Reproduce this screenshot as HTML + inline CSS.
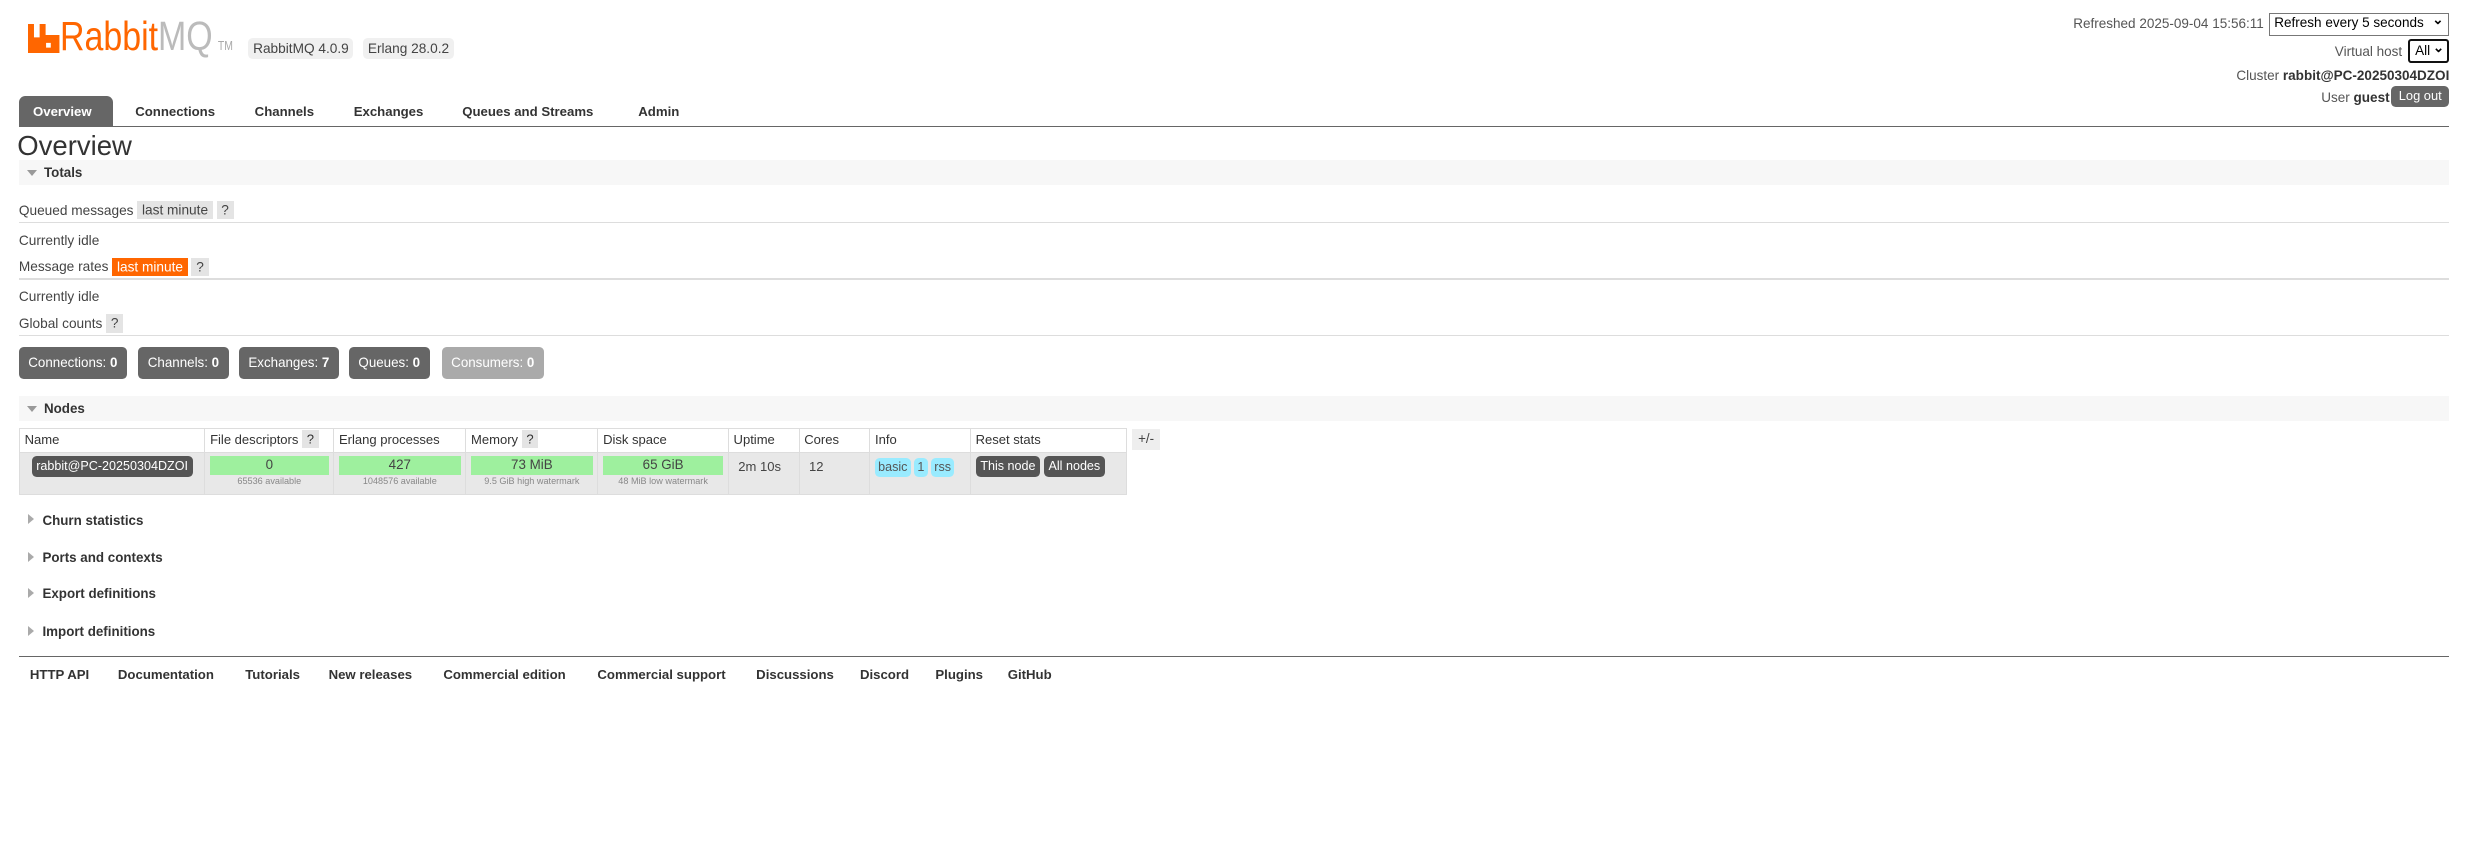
<!DOCTYPE html>
<html><head><meta charset="utf-8">
<style>
html,body{margin:0;padding:0;background:#fff;width:2465px;height:868px;overflow:hidden}
#w{zoom:1.5721;width:1568px;height:552px;position:relative;font-family:"Liberation Sans",sans-serif;color:#444;font-size:8.7px}
.a{position:absolute;white-space:nowrap}
.b{font-weight:bold}
.badge{background:#f0f0f0;border-radius:3px;padding:2px 3px;font-size:8.7px;color:#444}
.r{font-size:8.6px;color:#555;text-align:right;right:10px}
.sel{border:1px solid #777;background:#fff;color:#000;font-size:8.6px;box-sizing:border-box}
.tab{top:66px;font-weight:bold;font-size:8.4px;color:#333}
.hr{position:absolute;left:12px;width:1546px;height:1px;background:#ddd}
.sh{position:absolute;left:12px;width:1546px;height:16px;background:#f7f7f7}
.sh span{position:absolute;left:16px;top:3px;font-weight:bold;font-size:8.5px;color:#333}
.tri{position:absolute;left:5px;top:6px;width:0;height:0;border-left:3.5px solid transparent;border-right:3.5px solid transparent;border-top:4px solid #999}
.trr{position:absolute;left:18px;width:0;height:0;border-top:3.5px solid transparent;border-bottom:3.5px solid transparent;border-left:4px solid #aaa}
.q{background:#e4e4e4;padding:1px 3px}
.cnt{position:absolute;top:221px;height:20px;line-height:20px;background:#666;color:#fff;border-radius:3px;padding:0 6px;font-size:8.5px;box-sizing:border-box}
table{position:absolute;left:12px;top:272px;border-collapse:collapse;border:1px solid #ccc;font-size:8.3px;table-layout:fixed;width:704px}
td,th{border:1px solid #ddd;padding:0;text-align:left;font-weight:normal;vertical-align:top;white-space:nowrap;overflow:hidden}
th{height:13px;padding:2px 3px 0;background:#fff;color:#333}
tr.d td{background:#e8e8e8;height:22px;text-align:center}
.g{background:#9ef09e;margin:2px 3px 0;height:12px;line-height:12px;color:#444;font-size:8.5px}
.s{font-size:5.8px;color:#888;line-height:8px}
.pill{display:inline-block;background:#555;color:#fff;border-radius:3px;padding:0 3px;height:13px;line-height:13px;margin-top:2px;font-size:8px}
.i{display:inline-block;background:#99ebff;border-radius:3px;padding:0 2px;height:12px;line-height:12px;margin-top:3px;color:#555;font-size:8px}
.ft{top:424px;font-weight:bold;font-size:8.4px;color:#333}
</style></head><body><div id="w">
<svg class="a" style="left:18px;top:15px" width="20" height="19" viewBox="0 0 20 19"><path d="M0 0h3.8v8.5h3.6V0h3.8v7H20v12H0z M11.5 12v3h3v-3z" fill="#f60" fill-rule="evenodd"/></svg>
<div class="a" style="left:38px;top:8px;font-size:26px;color:#f60;transform:scaleX(0.83);transform-origin:0 0">Rabbit<span style="color:#bbb">MQ</span><span style="font-size:8px;color:#aaa;margin-left:4px">TM</span></div>
<div class="a badge" style="left:158px;top:24px">RabbitMQ 4.0.9</div>
<div class="a badge" style="left:231px;top:24px">Erlang 28.0.2</div>

<div class="a r" style="right:128px;top:10px">Refreshed 2025-09-04 15:56:11</div>
<div class="a sel" style="left:1443px;top:8px;width:115px;height:15px;padding:1px 3px;font-size:8.6px">Refresh every 5 seconds<span style="position:absolute;right:3px;top:-1px;font-weight:bold">&#8964;</span></div>
<div class="a r" style="right:40px;top:28px">Virtual host</div>
<div class="a sel" style="left:1532px;top:25px;width:26px;height:15px;border:1.5px solid #111;border-radius:2px;padding:1px 3px;font-size:8.6px">All<span style="position:absolute;right:2px;top:-1px;font-weight:bold">&#8964;</span></div>
<div class="a r" style="top:43px">Cluster <b style="color:#333">rabbit@PC-20250304DZOI</b></div>
<div class="a r" style="right:48px;top:57px">User <b style="color:#333">guest</b></div>
<div class="a" style="left:1521px;top:55px;width:37px;height:13px;background:#666;color:#fff;border-radius:3px;font-size:8.2px;line-height:13px;text-align:center">Log out</div>

<div class="a" style="left:12px;top:61px;width:60px;height:20px;background:#666;border-radius:4px 4px 0 0"></div>
<div class="a tab" style="left:21px;color:#fff">Overview</div>
<div class="a tab" style="left:86px">Connections</div>
<div class="a tab" style="left:162px">Channels</div>
<div class="a tab" style="left:225px">Exchanges</div>
<div class="a tab" style="left:294px">Queues and Streams</div>
<div class="a tab" style="left:406px">Admin</div>
<div class="a" style="left:12px;top:80px;width:1546px;height:1px;background:#666"></div>
<div class="a" style="left:11px;top:83px;font-size:17.5px;color:#333">Overview</div>

<div class="sh" style="top:102px"><i class="tri"></i><span>Totals</span></div>
<div class="a" style="left:12px;top:129px">Queued messages <span class="q">last minute</span> <span class="q">?</span></div>
<div class="hr" style="top:141px"></div>
<div class="a" style="left:12px;top:148px">Currently idle</div>
<div class="a" style="left:12px;top:165px">Message rates <span class="q" style="background:#f60;color:#fff">last minute</span> <span class="q">?</span></div>
<div class="hr" style="top:177px"></div>
<div class="a" style="left:12px;top:184px">Currently idle</div>
<div class="a" style="left:12px;top:201px">Global counts <span class="q">?</span></div>
<div class="hr" style="top:213px"></div>
<div class="cnt" style="left:12px">Connections: <b>0</b></div>
<div class="cnt" style="left:88px">Channels: <b>0</b></div>
<div class="cnt" style="left:152px">Exchanges: <b>7</b></div>
<div class="cnt" style="left:222px">Queues: <b>0</b></div>
<div class="cnt" style="left:281px;background:#aaa">Consumers: <b>0</b></div>

<div class="sh" style="top:252px"><i class="tri"></i><span>Nodes</span></div>
<table>
<colgroup><col style="width:118px"><col style="width:82px"><col style="width:84px"><col style="width:84px"><col style="width:83px"><col style="width:45px"><col style="width:45px"><col style="width:64px"><col style="width:99px"></colgroup>
<tr><th>Name</th><th>File descriptors <span class="q">?</span></th><th>Erlang processes</th><th>Memory <span class="q">?</span></th><th>Disk space</th><th>Uptime</th><th>Cores</th><th>Info</th><th>Reset stats</th></tr>
<tr class="d"><td><span class="pill" style="margin-top:2px">rabbit@PC-20250304DZOI</span></td>
<td><div class="g">0</div><div class="s">65536 available</div></td>
<td><div class="g">427</div><div class="s">1048576 available</div></td>
<td><div class="g">73 MiB</div><div class="s">9.5 GiB high watermark</div></td>
<td><div class="g">65 GiB</div><div class="s">48 MiB low watermark</div></td>
<td style="text-align:left;padding:4px 0 0 6px">2m 10s</td>
<td style="text-align:left;padding:4px 0 0 6px">12</td>
<td style="text-align:left;padding-left:3px"><span class="i">basic</span> <span class="i">1</span> <span class="i">rss</span></td>
<td style="text-align:left;padding-left:3px"><span class="pill">This node</span> <span class="pill">All nodes</span></td></tr>
</table>
<div class="a" style="left:720px;top:273px;width:18px;height:13px;background:#eee;text-align:center;line-height:13px;font-size:8.5px">+/-</div>

<i class="trr" style="top:327px"></i><div class="a b" style="left:27px;top:326px;color:#333;font-size:8.5px">Churn statistics</div>
<i class="trr" style="top:351px"></i><div class="a b" style="left:27px;top:350px;color:#333;font-size:8.5px">Ports and contexts</div>
<i class="trr" style="top:374px"></i><div class="a b" style="left:27px;top:373px;color:#333;font-size:8.5px">Export definitions</div>
<i class="trr" style="top:398px"></i><div class="a b" style="left:27px;top:397px;color:#333;font-size:8.5px">Import definitions</div>
<div class="a" style="left:12px;top:417px;width:1546px;height:1px;background:#666"></div>
<div class="a ft" style="left:19px">HTTP API</div>
<div class="a ft" style="left:75px">Documentation</div>
<div class="a ft" style="left:156px">Tutorials</div>
<div class="a ft" style="left:209px">New releases</div>
<div class="a ft" style="left:282px">Commercial edition</div>
<div class="a ft" style="left:380px">Commercial support</div>
<div class="a ft" style="left:481px">Discussions</div>
<div class="a ft" style="left:547px">Discord</div>
<div class="a ft" style="left:595px">Plugins</div>
<div class="a ft" style="left:641px">GitHub</div>
</div></body></html>
